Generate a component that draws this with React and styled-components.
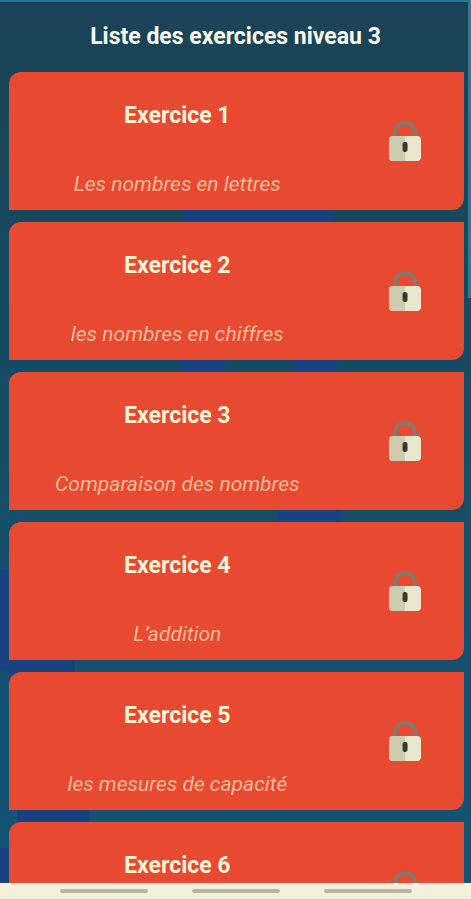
import React from 'react'
import styled, { createGlobalStyle } from 'styled-components'

const exercices = [
  { id: 1, detail: 'Les nombres en lettres' },
  { id: 2, detail: 'les nombres en chiffres' },
  { id: 3, detail: 'Comparaison des nombres' },
  { id: 4, detail: 'L’addition' },
  { id: 5, detail: 'les mesures de capacité' },
  { id: 6, detail: '' },
]

function Lock() {
  return (
    <LockIcon viewBox="0 0 34 42" aria-hidden="true">
      <path d="M7 17V13A10 10 0 0 1 27 13V17" fill="none" stroke="#82786c" strokeWidth="4" />
      <rect x="1" y="16" width="32" height="25" rx="4" fill="#ebe7cf" />
      <path d="M17 16H5a4 4 0 0 0-4 4v17a4 4 0 0 0 4 4h12z" fill="#cfcbaf" />
      <rect x="14" y="22" width="6" height="10" rx="3" fill="#8b8a73" />
      <rect x="15" y="22" width="4" height="10" rx="2" fill="#35382a" />
    </LockIcon>
  )
}

function ExerciceCard({ id, detail }) {
  return (
    <li>
      <Card type="button">
        <CardText>
          <Name>Exercice {id}</Name>
          <Detail>{detail}</Detail>
        </CardText>
        <Lock />
      </Card>
    </li>
  )
}

export default function App() {
  return (
    <>
      <GlobalStyle />
      <Screen>
        {/* blue shapes behind the list */}
        <Backdrop viewBox="0 0 471 900" preserveAspectRatio="none" aria-hidden="true">
          <path d="M183 240V210H333V300L338 372H293V320H226V372H180V240Z" />
          <rect x="278" y="480" width="63" height="60" />
          <path d="M0 570H9V640H75V690H9V671H0Z" />
          <path d="M17 800H90V830H17Z" />
          <path d="M0 848H9V900H0Z" />
        </Backdrop>
        <Header>
          <Title>Liste des exercices niveau 3</Title>
        </Header>
        <ListArea>
          <List>
            {exercices.map((item) => (
              <ExerciceCard key={item.id} {...item} />
            ))}
          </List>
        </ListArea>
        <ScrollThumb />
        <NavBar>
          <NavButton type="button" aria-label="Récents" />
          <NavButton type="button" aria-label="Accueil" />
          <NavButton type="button" aria-label="Retour" />
        </NavBar>
      </Screen>
    </>
  )
}

const GlobalStyle = createGlobalStyle`
  * {
    box-sizing: border-box;
  }

  body {
    margin: 0;
    font-family: Roboto, "Liberation Sans", sans-serif;
  }
`

const Screen = styled.div`
  position: relative;
  display: flex;
  flex-direction: column;
  height: 100vh;
  overflow: hidden;
  border-top: 2px solid #25789a;
  background: linear-gradient(#1c4255, #164a60 30%, #145474);
`

const Backdrop = styled.svg`
  position: absolute;
  top: -2px;
  left: 0;
  width: 100%;
  height: 100vh;
  fill: #184380;
`

const Header = styled.header`
  position: relative;
  padding: 21px 8px;
`

const Title = styled.h1`
  margin: 0;
  font-size: 23px;
  line-height: 28px;
  font-weight: 700;
  text-align: center;
  color: #f8fcf4;
`

const ListArea = styled.main`
  position: relative;
  flex: 1;
  min-height: 0;
  overflow: hidden;
`

const List = styled.ul`
  display: flex;
  flex-direction: column;
  gap: 12px;
  margin: 0;
  padding: 0 7px 0 9px;
  list-style: none;
`

const Card = styled.button`
  display: grid;
  grid-template-columns: 37fr 13fr;
  align-items: center;
  width: 100%;
  height: 138px;
  padding: 0;
  border: none;
  border-radius: 12px 0 12px 0;
  background: #e84a31;
  font-family: inherit;
  cursor: pointer;
`

const CardText = styled.span`
  display: flex;
  flex-direction: column;
  gap: 40px;
  padding-top: 18px;
  text-align: center;
`

const Name = styled.span`
  font-size: 23px;
  line-height: 28px;
  font-weight: 700;
  color: #fff3d6;
`

const Detail = styled.span`
  height: 28px;
  font-size: 21px;
  line-height: 28px;
  font-style: italic;
  color: #f9b997;
`

const LockIcon = styled.svg`
  justify-self: center;
  width: 34px;
  height: 42px;
`

const ScrollThumb = styled.div`
  position: absolute;
  top: 0;
  right: 0;
  width: 3px;
  height: 33%;
  background: #2a7c9c;
`

const NavBar = styled.nav`
  position: relative;
  display: flex;
  justify-content: center;
  align-items: center;
  gap: 44px;
  height: 17px;
  background: #f3f0dc;
  border-bottom: 1px solid #cfccb8;
`

const NavButton = styled.button`
  width: 88px;
  height: 4px;
  padding: 0;
  border: none;
  border-radius: 2px;
  background: #b9b69f;
`
